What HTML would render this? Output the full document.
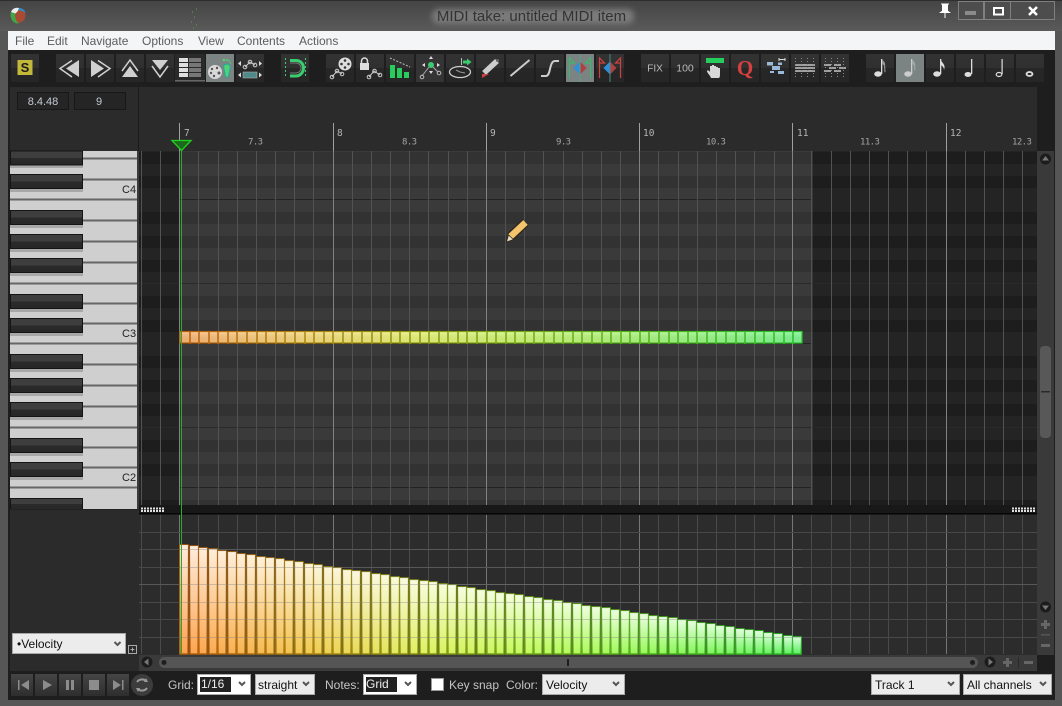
<!DOCTYPE html>
<html><head><meta charset="utf-8"><title>MIDI take: untitled MIDI item</title>
<style>
html,body{margin:0;padding:0;background:#4a4a4a;width:1062px;height:706px;overflow:hidden}
svg{display:block;font-family:"Liberation Sans",sans-serif}
.m{font-size:12px;fill:#5c5c5c}
.l{font-size:12px;fill:#c4c4c4}
.s{font-size:12px;fill:#111}
.r1{font-family:"DejaVu Sans Mono",monospace;font-size:9.5px;fill:#b5b5b5}
.r2{font-family:"DejaVu Sans Mono",monospace;font-size:9px;letter-spacing:-.6px;fill:#a5a5a5}
.k{font-size:11px;fill:#222}
</style></head><body>
<svg width="1062" height="706" viewBox="0 0 1062 706" xmlns="http://www.w3.org/2000/svg">
<defs>
<filter id="gl" x="-10%" y="-50%" width="120%" height="200%"><feGaussianBlur stdDeviation="3"/></filter>
<linearGradient id="tb" x1="0" y1="0" x2="0" y2="1"><stop offset="0" stop-color="#444"/><stop offset="1" stop-color="#5a5a5a"/></linearGradient>
<linearGradient id="btn" x1="0" y1="0" x2="0" y2="1"><stop offset="0" stop-color="#323232"/><stop offset=".5" stop-color="#303030"/><stop offset=".5" stop-color="#272727"/><stop offset="1" stop-color="#262626"/></linearGradient>
<linearGradient id="tbtn" x1="0" y1="0" x2="0" y2="1"><stop offset="0" stop-color="#454545"/><stop offset="1" stop-color="#2e2e2e"/></linearGradient>
<linearGradient id="bk" x1="0" y1="0" x2="0" y2="1"><stop offset="0" stop-color="#3e3e3e"/><stop offset=".5" stop-color="#3e3e3e"/><stop offset=".5" stop-color="#2b2b2b"/><stop offset="1" stop-color="#272727"/></linearGradient>
<linearGradient id="h" gradientUnits="userSpaceOnUse" x1="180" y1="0" x2="802" y2="0"><stop offset="0" stop-color="#ffa050"/><stop offset=".2" stop-color="#f2c850"/><stop offset=".38" stop-color="#dff060"/><stop offset=".55" stop-color="#c4fa5c"/><stop offset=".78" stop-color="#90f858"/><stop offset="1" stop-color="#58f060"/></linearGradient>
<linearGradient id="hn" gradientUnits="userSpaceOnUse" x1="180" y1="0" x2="802" y2="0"><stop offset="0" stop-color="#ffb878"/><stop offset=".2" stop-color="#fce080"/><stop offset=".38" stop-color="#ecf878"/><stop offset=".55" stop-color="#d2fc78"/><stop offset=".78" stop-color="#a8fc84"/><stop offset="1" stop-color="#80fc94"/></linearGradient>
<linearGradient id="hd" gradientUnits="userSpaceOnUse" x1="180" y1="0" x2="802" y2="0"><stop offset="0" stop-color="#b85c0c"/><stop offset=".2" stop-color="#ac8410"/><stop offset=".38" stop-color="#8a9410"/><stop offset=".55" stop-color="#74a818"/><stop offset=".78" stop-color="#4cb41c"/><stop offset="1" stop-color="#28c028"/></linearGradient>
<linearGradient id="wv" x1="0" y1="0" x2="0" y2="1"><stop offset="0" stop-color="#fff" stop-opacity=".8"/><stop offset="1" stop-color="#fff" stop-opacity="0"/></linearGradient>
<linearGradient id="nv" x1="0" y1="0" x2="0" y2="1"><stop offset="0" stop-color="#fff" stop-opacity=".25"/><stop offset="1" stop-color="#000" stop-opacity=".05"/></linearGradient>
<g id="bars">
<rect x="180" y="545" width="8" height="109"/><rect x="190" y="546" width="8" height="108"/><rect x="199" y="548" width="8" height="106"/><rect x="209" y="549" width="8" height="105"/><rect x="218" y="551" width="8" height="103"/><rect x="228" y="552" width="8" height="102"/><rect x="237" y="554" width="8" height="100"/><rect x="247" y="555" width="8" height="99"/><rect x="257" y="557" width="8" height="97"/><rect x="266" y="558" width="8" height="96"/><rect x="276" y="559" width="8" height="95"/><rect x="285" y="561" width="8" height="93"/><rect x="295" y="562" width="8" height="92"/><rect x="305" y="564" width="8" height="90"/><rect x="314" y="565" width="8" height="89"/><rect x="324" y="567" width="8" height="87"/><rect x="333" y="568" width="8" height="86"/><rect x="343" y="570" width="8" height="84"/><rect x="352" y="571" width="8" height="83"/><rect x="362" y="572" width="8" height="82"/><rect x="372" y="574" width="8" height="80"/><rect x="381" y="575" width="8" height="79"/><rect x="391" y="577" width="8" height="77"/><rect x="400" y="578" width="8" height="76"/><rect x="410" y="580" width="8" height="74"/><rect x="420" y="581" width="8" height="73"/><rect x="429" y="582" width="8" height="72"/><rect x="439" y="584" width="8" height="70"/><rect x="448" y="585" width="8" height="69"/><rect x="458" y="587" width="8" height="67"/><rect x="467" y="588" width="8" height="66"/><rect x="477" y="590" width="8" height="64"/><rect x="487" y="591" width="8" height="63"/><rect x="496" y="593" width="8" height="61"/><rect x="506" y="594" width="8" height="60"/><rect x="515" y="595" width="8" height="59"/><rect x="525" y="597" width="8" height="57"/><rect x="534" y="598" width="8" height="56"/><rect x="544" y="600" width="8" height="54"/><rect x="554" y="601" width="8" height="53"/><rect x="563" y="603" width="8" height="51"/><rect x="573" y="604" width="8" height="50"/><rect x="582" y="606" width="8" height="48"/><rect x="592" y="607" width="8" height="47"/><rect x="602" y="608" width="8" height="46"/><rect x="611" y="610" width="8" height="44"/><rect x="621" y="611" width="8" height="43"/><rect x="630" y="613" width="8" height="41"/><rect x="640" y="614" width="8" height="40"/><rect x="649" y="616" width="8" height="38"/><rect x="659" y="617" width="8" height="37"/><rect x="669" y="618" width="8" height="36"/><rect x="678" y="620" width="8" height="34"/><rect x="688" y="621" width="8" height="33"/><rect x="697" y="623" width="8" height="31"/><rect x="707" y="624" width="8" height="30"/><rect x="716" y="626" width="8" height="28"/><rect x="726" y="627" width="8" height="27"/><rect x="736" y="629" width="8" height="25"/><rect x="745" y="630" width="8" height="24"/><rect x="755" y="631" width="8" height="23"/><rect x="764" y="633" width="8" height="21"/><rect x="774" y="634" width="8" height="20"/><rect x="784" y="636" width="8" height="18"/><rect x="793" y="637" width="8" height="17"/>
</g>
</defs>

<!-- window chrome -->
<rect width="1062" height="706" fill="#565656"/>
<rect width="1062" height="31" fill="url(#tb)"/>
<rect x="0" y="0" width="1062" height="1" fill="#2e2e2e"/>
<rect x="8" y="31" width="1047" height="19" fill="#f4f5f7"/>
<rect x="8" y="50" width="1047" height="650" fill="#1e1e1e"/>

<!-- logo -->
<circle cx="18" cy="15.500" r="7.500" fill="#a84a34"/>
<path d="M10.500 14C10.500 20 14 24 19 23.500C15.500 20.500 14.500 17 15.500 12.500L11 11.500Z" fill="#3ea845"/>
<path d="M11 12C12 8.500 16 7 19 8C19 10 17 12 15.500 13.500Z" fill="#ececec"/>
<path d="M19 8C22 8 25 10 25.500 13C23 11 21 10 18 10.500Z" fill="#2f8fd0"/>
<path d="M192 12h1M196 9h1M194 17h1M191 22h1M196 25h1M193 28h1" stroke="#5a8a50" stroke-width="1.500" stroke-dasharray="1 1"/>

<!-- title -->
<rect x="432" y="9" width="202" height="15" rx="7" fill="#7a7a7a" filter="url(#gl)"/>
<text x="531.500" y="21" text-anchor="middle" font-size="15" fill="#333">MIDI take: untitled MIDI item</text>

<!-- window buttons -->
<g fill="#4d4d4d" stroke="#808080"><rect x="958.500" y="1.500" width="25" height="18"/><rect x="984.500" y="1.500" width="26" height="18"/><rect x="1010.500" y="1.500" width="44" height="18"/></g>
<rect x="965" y="11" width="11" height="4" fill="#8a8a8a"/>
<rect x="994" y="8" width="9" height="6.500" fill="none" stroke="#fff" stroke-width="2"/>
<path d="M1029 7l8 8M1037 7l-8 8" stroke="#fff" stroke-width="2.500"/>
<path d="M941 4h8M942.500 5h5v6l2 1.500h-9l2-1.500zM945 12v6" stroke="#fff" fill="#fff"/>

<!-- menu -->
<text class="m" x="15" y="45">File</text><text class="m" x="47" y="45">Edit</text><text class="m" x="81" y="45">Navigate</text><text class="m" x="142" y="45">Options</text><text class="m" x="198" y="45">View</text><text class="m" x="237" y="45">Contents</text><text class="m" x="299" y="45">Actions</text>

<!-- toolbar buttons -->
<g fill="url(#btn)">
<rect x="11" y="54" width="28" height="28"/><rect x="56" y="54" width="28" height="28"/><rect x="86" y="54" width="28" height="28"/><rect x="116" y="54" width="28" height="28"/><rect x="146" y="54" width="28" height="28"/><rect x="176" y="54" width="28" height="28"/><rect x="236" y="54" width="28" height="28"/><rect x="281" y="54" width="28" height="28"/><rect x="326" y="54" width="28" height="28"/><rect x="356" y="54" width="28" height="28"/><rect x="386" y="54" width="28" height="28"/><rect x="416" y="54" width="28" height="28"/><rect x="446" y="54" width="28" height="28"/><rect x="476" y="54" width="28" height="28"/><rect x="506" y="54" width="28" height="28"/><rect x="536" y="54" width="28" height="28"/><rect x="596" y="54" width="28" height="28"/><rect x="641" y="54" width="28" height="28"/><rect x="671" y="54" width="28" height="28"/><rect x="701" y="54" width="28" height="28"/><rect x="731" y="54" width="28" height="28"/><rect x="761" y="54" width="28" height="28"/><rect x="791" y="54" width="28" height="28"/><rect x="821" y="54" width="28" height="28"/><rect x="866" y="54" width="28" height="28"/><rect x="926" y="54" width="28" height="28"/><rect x="956" y="54" width="28" height="28"/><rect x="986" y="54" width="28" height="28"/><rect x="1016" y="54" width="28" height="28"/>
</g>
<g fill="#7b8383"><rect x="206" y="54" width="28" height="28"/><rect x="566" y="54" width="28" height="28"/><rect x="896" y="54" width="28" height="28"/></g>

<!-- S -->
<rect x="17.500" y="60" width="15" height="15" fill="#c4b83a"/>
<text x="25" y="72" text-anchor="middle" font-size="13" font-weight="bold" fill="#1a1a1a">S</text>
<!-- transport arrows -->
<g fill="#d0d0d0" stroke="none">
<path d="M66 68.500l13-8.500v17z"/><path d="M72 60.500L60 68.500l12 8.500" fill="none" stroke="#d0d0d0" stroke-width="1.500"/>
<path d="M104 68.500l-13-8.500v17z"/><path d="M98 60.500l12 8L98 77" fill="none" stroke="#d0d0d0" stroke-width="1.500"/>
<path d="M130 66l8 11h-16z"/><path d="M122 71l8-11 8 11" fill="none" stroke="#d0d0d0" stroke-width="1.500"/>
<path d="M152 60h16l-8 10z"/><path d="M152 66l8 11 8-11" fill="none" stroke="#d0d0d0" stroke-width="1.500"/>
</g>
<!-- list view -->
<rect x="175" y="54" width="30" height="28" fill="#2a2a2a"/><rect x="175" y="80" width="30" height="1.500" fill="#666"/>
<g fill="#e0e0e0"><rect x="179" y="58" width="9" height="4"/><rect x="179" y="63" width="9" height="4"/><rect x="179" y="68" width="9" height="4"/><rect x="179" y="73" width="9" height="4"/></g>
<g fill="#777"><rect x="189" y="58" width="12" height="4"/><rect x="189" y="63" width="12" height="4"/><rect x="189" y="68" width="12" height="4"/><rect x="189" y="73" width="12" height="4"/></g>
<!-- palette + foot -->
<ellipse cx="215" cy="72" rx="7" ry="7" fill="#d8d8d8"/>
<g fill="#555"><circle cx="212" cy="69" r="1.200"/><circle cx="217" cy="68" r="1.200"/><circle cx="211" cy="73" r="1.200"/><circle cx="214" cy="76" r="1.200"/><circle cx="219" cy="73" r="1.500"/></g>
<path d="M224 65c4-2 7 0 6 4-1 3-1 7-2 8-2 1-3-1-3-3 0-3-2-5-1-9z" fill="#4ed27a" stroke="#2a9"/>
<g fill="#4ed27a"><circle cx="224" cy="60" r="1.300"/><circle cx="227" cy="60" r="1"/><circle cx="229" cy="61" r=".9"/><circle cx="230.500" cy="63" r=".8"/></g>
<!-- env/cc -->
<g fill="none" stroke="#ccc"><path d="M245 67l5-5 5 3"/><circle cx="245" cy="67" r="1.800"/><circle cx="250" cy="62" r="1.800"/><circle cx="255" cy="65" r="1.800"/></g>
<g fill="#ddd"><path d="M238 63.500l3-2.500v5zM262 63.500l-3-2.500v5zM238 75l3-2.500v5zM262 75l-3-2.500v5z"/></g>
<rect x="243" y="72" width="14" height="6" fill="#4f8a8a" stroke="#aaa" stroke-width=".6"/>
<!-- magnet -->
<path d="M290 60.500h6c4 0 7.500 3 7.500 7.500s-3.500 8-7.500 8h-6" fill="none" stroke="#3ccc70" stroke-width="3"/>
<path d="M290 63h6c3 0 5 2.500 5 5s-2 5-5 5h-6" fill="none" stroke="#777" stroke-width="1"/>
<path d="M285.500 58v20M305.500 58v20" stroke="#3ccc70" stroke-dasharray="2 2"/>
<!-- reel env -->
<circle cx="345" cy="64" r="6.500" fill="#ddd"/><g fill="#333"><circle cx="345" cy="60.500" r="1.300"/><circle cx="345" cy="67.500" r="1.300"/><circle cx="341.500" cy="64" r="1.300"/><circle cx="348.500" cy="64" r="1.300"/></g>
<g fill="none" stroke="#ccc"><path d="M332 77l5-6 5 3"/><circle cx="332" cy="77" r="1.800"/><circle cx="337" cy="71" r="1.800"/><circle cx="342" cy="74" r="1.800"/></g>
<!-- lock env -->
<rect x="360" y="63" width="9" height="7" fill="#ddd"/><path d="M361.500 63v-2a3 3 0 0 1 6 0v2" fill="none" stroke="#ddd" stroke-width="1.500"/>
<g fill="none" stroke="#ccc"><path d="M369 77l5-6 6 4"/><circle cx="369" cy="77" r="1.800"/><circle cx="374.500" cy="71" r="1.800"/><circle cx="380" cy="75" r="1.800"/></g>
<!-- bars -->
<g fill="#26cc5c"><rect x="390" y="65" width="5" height="13"/><rect x="397" y="68" width="5" height="10"/><rect x="404" y="72" width="5" height="6"/></g>
<path d="M390 58l20 9" stroke="#bbb" stroke-dasharray="2 1.500"/>
<!-- node arrows -->
<rect x="416" y="54" width="28" height="28" fill="#343434"/>
<circle cx="431" cy="65" r="3" fill="#3ccc70"/>
<g fill="#ddd"><path d="M431 56l2 3h-4zM431 74l2-3h-4zM422 65l3-2v4zM440 65l-3-2v4z"/></g>
<path d="M429 67l-7 9M433 67l5 5" stroke="#aaa" fill="none"/><g fill="none" stroke="#bbb"><circle cx="422" cy="77" r="1.800"/><circle cx="439" cy="73" r="1.800"/></g>
<!-- clock -->
<ellipse cx="460" cy="72" rx="10.500" ry="5.500" fill="none" stroke="#ccc" stroke-width="1.300"/>
<path d="M460 72l-4-2M460 72l5 1" stroke="#999"/><path d="M461.500 58v7" stroke="#bbb"/>
<path d="M463 60.500h4v-2l4.500 3.500-4.500 3.500v-2h-4z" fill="#3ccc70"/>
<!-- pencil -->
<path d="M484 73l13-12" stroke="#ccc" stroke-width="5.500"/><circle cx="497.500" cy="60.500" r="1.500" fill="#666"/>
<path d="M482 74h7l-7 4z" fill="#d04040"/>
<!-- line -->
<path d="M510.500 76l19-16" stroke="#ccc" stroke-width="2"/>
<!-- curve -->
<path d="M541 76h5c5 0 3-15 9-15h4" fill="none" stroke="#ccc" stroke-width="2"/>
<!-- brackets selected -->
<path d="M569.500 78V58l5 5h-5M590.500 78V58l-5 5h5" fill="none" stroke="#3cb870" stroke-width="1.200"/>
<path d="M580 54v28" stroke="#5aa38a"/>
<path d="M579.500 62v12l-6-6z" fill="#2f8fdc"/><path d="M580.500 62v12l6-6z" fill="#b04040"/>
<path d="M599.500 78V58l5 5h-5M620.500 78V58l-5 5h5" fill="none" stroke="#d04040" stroke-width="1.200"/>
<path d="M610 54v28" stroke="#4a8a8a"/>
<path d="M609.500 62v12l-6-6z" fill="#2f8fdc"/><path d="M610.500 62v12l6-6z" fill="#b04040"/>
<!-- FIX 100 -->
<text x="655" y="71.500" text-anchor="middle" font-size="10" fill="#b8b8b8">FIX</text>
<text x="685" y="71.500" text-anchor="middle" font-size="10.500" fill="#b8b8b8">100</text>
<!-- hand -->
<rect x="706" y="58" width="18" height="5" fill="#26cc5c"/>
<path d="M711 78c-1-3-4-5-4-7 0-1 2-1 3 1v-6h2v-1h2v1h2v1h2v1h2v7c0 2-1 3-1 3z" fill="#d8d8d8"/>
<!-- Q -->
<text x="745" y="75" text-anchor="middle" font-family="Liberation Serif" font-weight="bold" font-size="21" fill="#d84040">Q</text>
<!-- blocks -->
<g fill="#9ab8d8"><rect x="767" y="62" width="6" height="3.500"/><rect x="778" y="62.500" width="4" height="2.500"/><rect x="772" y="66" width="8" height="4"/><rect x="770" y="71" width="4" height="2"/><rect x="778" y="71" width="6" height="3"/></g>
<path d="M779 58v3M785 58v3M779 59.500h6" stroke="#ddd"/>
<!-- grid quant -->
<g fill="#a0a0a0"><rect x="795" y="64" width="20" height="2"/><rect x="795" y="67" width="20" height="2"/><rect x="795" y="70" width="20" height="2"/>
<rect x="824" y="64" width="7" height="2"/><rect x="834" y="64" width="7" height="2"/><rect x="829" y="67" width="7" height="2"/><rect x="839" y="67" width="7" height="2"/><rect x="824" y="70" width="7" height="2"/><rect x="834" y="70" width="7" height="2"/></g>
<path d="M795.500 58v20M801.500 58v20M807.500 58v20M813.500 58v20M825.500 58v20M831.500 58v20M837.500 58v20M843.500 58v20" stroke="#888" stroke-dasharray="1 2" fill="none"/>
<!-- notes -->
<g fill="#ddd" stroke="none">
<ellipse cx="878" cy="74" rx="3.800" ry="2.700"/><rect x="881" y="59" width="1.300" height="15"/><path d="M882 59l3 4 .5 9-1 .5-.5-7-2-2z" fill="#999"/>
<ellipse cx="908" cy="74" rx="3.800" ry="2.700" fill="#ccc"/><rect x="911" y="59" width="1.300" height="15" fill="#ccc"/><path d="M912 59l3 4 .5 7-1 .5-.5-5-2-2z" fill="#a0a8a8"/>
<ellipse cx="937" cy="74" rx="3.800" ry="2.700"/><rect x="940" y="59" width="1.300" height="15"/><path d="M941 60c1 3 4 4 3.500 8l-.5 2c0-3-2-4-3-5z"/>
<ellipse cx="968" cy="74.500" rx="3.500" ry="2.500"/><rect x="971" y="59" width="1.300" height="15"/>
<ellipse cx="999" cy="74.500" rx="2.800" ry="2" fill="none" stroke="#ddd" stroke-width="1.200"/><rect x="1001.500" y="59" width="1.200" height="15"/>
<ellipse cx="1029.500" cy="74" rx="3" ry="2" fill="none" stroke="#ddd" stroke-width="1.800"/>
</g>

<!-- panels -->
<rect x="10" y="87" width="1027" height="584" fill="#2b2b2b"/>
<rect x="138" y="87" width="1" height="64" fill="#1a1a1a"/>
<rect x="17.500" y="92.500" width="51" height="17" fill="#252525" stroke="#181818"/>
<rect x="74.500" y="92.500" width="51" height="17" fill="#252525" stroke="#181818"/>
<text x="43" y="105" text-anchor="middle" font-size="11" fill="#c4cad4">8.4.48</text>
<text x="99" y="105" text-anchor="middle" font-size="11" fill="#c4cad4">9</text>

<!-- ruler -->
<path d="M179.500 123v28M333.500 123v28M486.500 123v28M639.500 123v28M792.500 123v28M946.500 123v28" stroke="#a0a0a0" fill="none"/>
<text class="r1" x="184" y="136">7</text><text class="r1" x="337" y="136">8</text><text class="r1" x="490" y="136">9</text><text class="r1" x="643" y="136">10</text><text class="r1" x="797" y="136">11</text><text class="r1" x="950" y="136">12</text>
<text class="r2" x="248" y="144.500">7.3</text><text class="r2" x="402" y="144.500">8.3</text><text class="r2" x="556" y="144.500">9.3</text><text class="r2" x="706" y="144.500">10.3</text><text class="r2" x="860" y="144.500">11.3</text><text class="r2" x="1012" y="144.500">12.3</text>

<!-- piano -->
<rect x="10" y="151" width="127" height="358" fill="#cfcfcf"/>
<rect x="137" y="151" width="2" height="358" fill="#3a3a3a"/>
<path d="M83 158.500h54M83 179.500h54M10 199.500h127M83 220.500h54M83 241.500h54M83 262.500h54M10 283.500h127M83 303.500h54M83 323.500h54M10 343.500h127M83 364.500h54M83 385.500h54M83 406.500h54M10 427.500h127M83 447.500h54M83 467.500h54M10 487.500h127" stroke="#666" stroke-width="2" fill="none"/>
<g fill="#a8a8a8"><rect x="10" y="165" width="73" height="3"/><rect x="10" y="189" width="73" height="3"/><rect x="10" y="225" width="73" height="3"/><rect x="10" y="249" width="73" height="3"/><rect x="10" y="273" width="73" height="3"/><rect x="10" y="309" width="73" height="3"/><rect x="10" y="333" width="73" height="3"/><rect x="10" y="369" width="73" height="3"/><rect x="10" y="393" width="73" height="3"/><rect x="10" y="417" width="73" height="3"/><rect x="10" y="453" width="73" height="3"/><rect x="10" y="477" width="73" height="3"/></g>
<g fill="url(#bk)" stroke="#151515"><rect x="10.500" y="151" width="72" height="14"/><rect x="10.500" y="174.500" width="72" height="14"/><rect x="10.500" y="210.500" width="72" height="14"/><rect x="10.500" y="234.500" width="72" height="14"/><rect x="10.500" y="258.500" width="72" height="14"/><rect x="10.500" y="294.500" width="72" height="14"/><rect x="10.500" y="318.500" width="72" height="14"/><rect x="10.500" y="354.500" width="72" height="14"/><rect x="10.500" y="378.500" width="72" height="14"/><rect x="10.500" y="402.500" width="72" height="14"/><rect x="10.500" y="438.500" width="72" height="14"/><rect x="10.500" y="462.500" width="72" height="14"/><rect x="10.500" y="498.500" width="72" height="11"/></g>
<text class="k" x="122" y="193">C4</text><text class="k" x="122" y="337">C3</text><text class="k" x="122" y="481">C2</text>
<rect x="10" y="509" width="128" height="1" fill="#222"/>

<!-- note grid -->
<rect x="139" y="151" width="898" height="354" fill="#242424"/>
<rect x="180" y="151" width="633" height="354" fill="#3a3a3a"/>
<g fill="#1d1d1d"><rect x="139" y="152" width="41" height="12"/><rect x="139" y="176" width="41" height="12"/><rect x="139" y="212" width="41" height="12"/><rect x="139" y="236" width="41" height="12"/><rect x="139" y="260" width="41" height="12"/><rect x="139" y="296" width="41" height="12"/><rect x="139" y="320" width="41" height="12"/><rect x="139" y="356" width="41" height="12"/><rect x="139" y="380" width="41" height="12"/><rect x="139" y="404" width="41" height="12"/><rect x="139" y="440" width="41" height="12"/><rect x="139" y="464" width="41" height="12"/><rect x="139" y="500" width="41" height="5"/>
<rect x="813" y="152" width="224" height="12"/><rect x="813" y="176" width="224" height="12"/><rect x="813" y="212" width="224" height="12"/><rect x="813" y="236" width="224" height="12"/><rect x="813" y="260" width="224" height="12"/><rect x="813" y="296" width="224" height="12"/><rect x="813" y="320" width="224" height="12"/><rect x="813" y="356" width="224" height="12"/><rect x="813" y="380" width="224" height="12"/><rect x="813" y="404" width="224" height="12"/><rect x="813" y="440" width="224" height="12"/><rect x="813" y="464" width="224" height="12"/><rect x="813" y="500" width="224" height="5"/></g>
<g fill="#323232"><rect x="180" y="152" width="633" height="12"/><rect x="180" y="176" width="633" height="12"/><rect x="180" y="212" width="633" height="12"/><rect x="180" y="236" width="633" height="12"/><rect x="180" y="260" width="633" height="12"/><rect x="180" y="296" width="633" height="12"/><rect x="180" y="320" width="633" height="12"/><rect x="180" y="356" width="633" height="12"/><rect x="180" y="380" width="633" height="12"/><rect x="180" y="404" width="633" height="12"/><rect x="180" y="440" width="633" height="12"/><rect x="180" y="464" width="633" height="12"/><rect x="180" y="500" width="633" height="5"/></g>
<path d="M180 199.500h632M180 343.500h632M180 487.500h632" stroke="#222" fill="none"/>
<path d="M139 283.500h898M139 427.500h898" stroke="#2a2a2a" fill="none"/>
<g stroke="#525252" fill="none" shape-rendering="crispEdges">
<path d="M141.500 151v354M160.500 151v354M198.500 151v354M218.500 151v354M237.500 151v354M256.500 151v354M275.500 151v354M294.500 151v354M313.500 151v354M352.500 151v354M371.500 151v354M390.500 151v354M409.500 151v354M428.500 151v354M448.500 151v354M467.500 151v354M505.500 151v354M524.500 151v354M543.500 151v354M563.500 151v354M582.500 151v354M601.500 151v354M620.500 151v354M658.500 151v354M678.500 151v354M697.500 151v354M716.500 151v354M735.500 151v354M754.500 151v354M774.500 151v354M811.500 151v354M831.500 151v354M850.500 151v354M869.500 151v354M888.500 151v354M907.500 151v354M926.500 151v354M965.500 151v354M984.500 151v354M1003.500 151v354M1022.500 151v354"/>
<path stroke="#828282" d="M179.500 151v354M333.500 151v354M486.500 151v354M639.500 151v354M792.500 151v354M946.500 151v354"/>
</g>

<!-- divider -->
<rect x="139" y="505" width="898" height="8" fill="#181818"/>
<rect x="139" y="513" width="898" height="1.500" fill="#050505"/>
<path d="M141 508.500h23M141 511h23M1012 508.500h23M1012 511h23" stroke="#e0e0e0" stroke-width="2" stroke-dasharray="2 1" fill="none"/>

<!-- CC lane -->
<rect x="139" y="515" width="898" height="140" fill="#2c2c2c"/>
<g stroke="#4a4a4a" fill="none" shape-rendering="crispEdges">
<path d="M141.500 515v139M160.500 515v139M198.500 515v139M218.500 515v139M237.500 515v139M256.500 515v139M275.500 515v139M294.500 515v139M313.500 515v139M352.500 515v139M371.500 515v139M390.500 515v139M409.500 515v139M428.500 515v139M448.500 515v139M467.500 515v139M505.500 515v139M524.500 515v139M543.500 515v139M563.500 515v139M582.500 515v139M601.500 515v139M620.500 515v139M658.500 515v139M678.500 515v139M697.500 515v139M716.500 515v139M735.500 515v139M754.500 515v139M774.500 515v139M811.500 515v139M831.500 515v139M850.500 515v139M869.500 515v139M888.500 515v139M907.500 515v139M926.500 515v139M965.500 515v139M984.500 515v139M1003.500 515v139M1022.500 515v139"/>
<path stroke="#767676" d="M179.500 515v139M333.500 515v139M486.500 515v139M639.500 515v139M792.500 515v139M946.500 515v139"/>
<path stroke="#484848" d="M139 532.500h898M139 549.500h898M139 567.500h898M139 602.500h898M139 619.500h898M139 637.500h898"/>
<path stroke="#585858" d="M139 584.500h898"/>
</g>
<use href="#bars" fill="url(#h)" stroke="url(#hd)" stroke-width="1.500"/>
<use href="#bars" fill="url(#wv)" stroke="none"/>
<path d="M180 549.500h622M180 567.500h622M180 584.500h622M180 602.500h622M180 619.500h622M180 637.500h622" stroke="#777" stroke-opacity=".35" fill="none" shape-rendering="crispEdges"/>

<!-- notes row -->
<rect x="180" y="331" width="622" height="12.500" fill="url(#hn)"/>
<rect x="180" y="331" width="622" height="12.500" fill="url(#nv)"/>
<path d="M190 331v13M199 331v13M209 331v13M218 331v13M228 331v13M237 331v13M247 331v13M257 331v13M266 331v13M276 331v13M285 331v13M295 331v13M305 331v13M314 331v13M324 331v13M333 331v13M343 331v13M352 331v13M362 331v13M372 331v13M381 331v13M391 331v13M400 331v13M410 331v13M420 331v13M429 331v13M439 331v13M448 331v13M458 331v13M467 331v13M477 331v13M487 331v13M496 331v13M506 331v13M515 331v13M525 331v13M534 331v13M544 331v13M554 331v13M563 331v13M573 331v13M582 331v13M592 331v13M602 331v13M611 331v13M621 331v13M630 331v13M640 331v13M649 331v13M659 331v13M669 331v13M678 331v13M688 331v13M697 331v13M707 331v13M716 331v13M726 331v13M736 331v13M745 331v13M755 331v13M764 331v13M774 331v13M784 331v13M793 331v13" stroke="url(#hd)" stroke-width="1.500" fill="none"/>
<rect x="180" y="331.500" width="622" height="11.500" fill="none" stroke="url(#hd)" stroke-width="1.200"/>

<!-- playhead -->
<path d="M181.500 151v503" stroke="#22b022" fill="none"/>
<path d="M172 140.500h19l-9.500 10z" fill="#1b6a1b" stroke="#20d020" stroke-width="1.300"/>

<!-- pencil cursor -->
<path d="M510.500 236.500l15-14" stroke="#2c2618" stroke-width="9"/>
<path d="M510.500 236.500l15-14" stroke="#f4c46c" stroke-width="6.500"/>
<path d="M506.500 242l2-7 5 4.500z" fill="#e8dcc0" stroke="#2c2618" stroke-width=".7"/>

<!-- v scrollbar -->
<rect x="1037" y="151" width="17" height="504" fill="#3a3a3a"/>
<circle cx="1045.500" cy="159" r="5.500" fill="#1c1c1c"/><path d="M1045.500 156l3.500 4.500h-7z" fill="#777"/>
<rect x="1040" y="346" width="11" height="92" rx="4" fill="#585858"/>
<rect x="1041" y="391" width="9" height="1.500" fill="#2a2a2a"/>
<circle cx="1045.500" cy="607" r="5.500" fill="#1c1c1c"/><path d="M1045.500 610l3.500-4.500h-7z" fill="#777"/>
<path d="M1041 624.500h9M1045.500 620v9" stroke="#666" stroke-width="3"/>
<rect x="1041" y="634" width="9" height="1.500" fill="#555"/>
<rect x="1041" y="644" width="9" height="3" fill="#666"/>

<!-- h scrollbar -->
<rect x="139" y="655" width="898" height="16" fill="#3a3a3a"/>
<circle cx="147" cy="662" r="5.500" fill="#1c1c1c"/><path d="M144 662l4.500-3.500v7z" fill="#777"/>
<rect x="159" y="657" width="819" height="11" rx="5.500" fill="#555"/>
<circle cx="164" cy="662.500" r="2.500" fill="#1e1e1e"/><circle cx="972.500" cy="662.500" r="2.500" fill="#1e1e1e"/>
<rect x="567" y="659" width="2" height="7" fill="#1e1e1e"/>
<circle cx="990" cy="662" r="5.500" fill="#1c1c1c"/><path d="M993 662l-4.500-3.500v7z" fill="#777"/>
<path d="M1003 662.500h9M1007.500 658v9" stroke="#666" stroke-width="3"/>
<rect x="1018" y="657" width="1" height="11" fill="#2a2a2a"/>
<rect x="1024" y="661" width="9" height="3" fill="#666"/>

<!-- cc selector -->
<rect x="12.500" y="633.500" width="113" height="20" fill="#ececec" stroke="#a8a8a8"/>
<text class="s" x="17" y="648">•Velocity</text>
<path d="M114.500 642l3 3 3-3" fill="none" stroke="#555" stroke-width="2"/>
<rect x="128.500" y="645.500" width="8" height="8" fill="none" stroke="#aaa"/><path d="M130.500 649.500h4M132.500 647.500v4" stroke="#aaa"/>

<!-- bottom bar -->
<rect x="8" y="671" width="1047" height="29" fill="#1e1e1e"/>
<g fill="url(#tbtn)"><rect x="11" y="674" width="22" height="22"/><rect x="35" y="674" width="22" height="22"/><rect x="59" y="674" width="22" height="22"/><rect x="83" y="674" width="22" height="22"/><rect x="107" y="674" width="22" height="22"/></g>
<g fill="#8c8c8c">
<rect x="18" y="680" width="1.500" height="10"/><path d="M29 680v10l-8-5z"/>
<path d="M43 680l9 5-9 5z"/>
<rect x="66" y="680" width="3" height="10"/><rect x="71" y="680" width="3" height="10"/>
<rect x="89" y="680" width="10" height="10"/>
<path d="M113 680l8 5-8 5z"/><rect x="122" y="680" width="1.500" height="10"/>
</g>
<circle cx="142" cy="685" r="11" fill="#3c3c3c"/>
<path d="M137 682a6 6 0 0 1 9-1M147 688a6 6 0 0 1-9 1" fill="none" stroke="#999" stroke-width="2"/><path d="M146 678l2 4-4 0zM138 692l-2-4 4 0z" fill="#999"/>

<text class="l" x="168" y="689">Grid:</text>
<rect x="197.500" y="674.500" width="53" height="20" fill="#fff" stroke="#aaa"/>
<rect x="200" y="677" width="31" height="15" fill="#222"/>
<text x="201" y="688" font-size="12" fill="#eee">1/16</text>
<path d="M239 682l3 3 3-3" fill="none" stroke="#555" stroke-width="2"/>
<rect x="255.500" y="674.500" width="59" height="20" fill="#ececec" stroke="#aaa"/>
<text class="s" x="258" y="689">straight</text>
<path d="M303 682l3 3 3-3" fill="none" stroke="#555" stroke-width="2"/>
<text class="l" x="325" y="689">Notes:</text>
<rect x="363.500" y="674.500" width="53" height="20" fill="#fff" stroke="#aaa"/>
<rect x="366" y="677" width="31" height="15" fill="#222"/>
<text x="366" y="688" font-size="12" fill="#eee">Grid</text>
<path d="M405 682l3 3 3-3" fill="none" stroke="#555" stroke-width="2"/>
<rect x="431.500" y="678.500" width="12" height="12" fill="#fff" stroke="#999"/>
<text class="l" x="449" y="689">Key snap</text>
<text class="l" x="506" y="689">Color:</text>
<rect x="542.500" y="674.500" width="82" height="20" fill="#ececec" stroke="#aaa"/>
<text class="s" x="546" y="689">Velocity</text>
<path d="M613 682l3 3 3-3" fill="none" stroke="#555" stroke-width="2"/>
<rect x="871.500" y="674.500" width="88" height="20" fill="#ececec" stroke="#aaa"/>
<text class="s" x="875" y="689">Track 1</text>
<path d="M948 682l3 3 3-3" fill="none" stroke="#555" stroke-width="2"/>
<rect x="963.500" y="674.500" width="88" height="20" fill="#ececec" stroke="#aaa"/>
<text class="s" x="967" y="689">All channels</text>
<path d="M1040 682l3 3 3-3" fill="none" stroke="#555" stroke-width="2"/>
</svg>
</body></html>
